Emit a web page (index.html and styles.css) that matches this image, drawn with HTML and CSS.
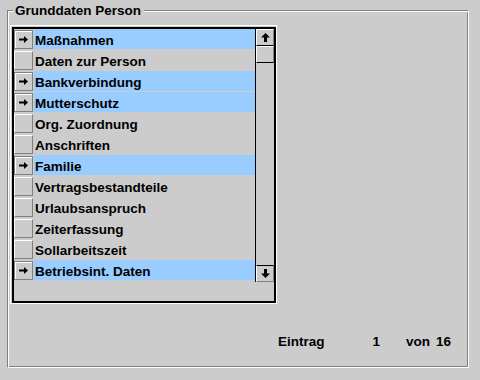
FILE: index.html
```html
<!DOCTYPE html>
<html>
<head>
<meta charset="utf-8">
<link rel="stylesheet" href="styles.css">
</head>
<body>
<div class="group">
  <div class="legend">Grunddaten Person</div>
  <div class="lb-outer">
    <div class="lb-frame">
      <div class="lb">
        <div class="rows">
          <div class="row sel"><span class="btn on"><svg width="9" height="7" viewBox="0 0 9 7"><path d="M0 2.5h5v2H0z M5 0v7l4-3.5z" fill="#000"/></svg></span><span class="txt">Maßnahmen</span></div>
          <div class="row"><span class="btn"></span><span class="txt">Daten zur Person</span></div>
          <div class="row sel"><span class="btn on"><svg width="9" height="7" viewBox="0 0 9 7"><path d="M0 2.5h5v2H0z M5 0v7l4-3.5z" fill="#000"/></svg></span><span class="txt">Bankverbindung</span></div>
          <div class="row sel"><span class="btn on"><svg width="9" height="7" viewBox="0 0 9 7"><path d="M0 2.5h5v2H0z M5 0v7l4-3.5z" fill="#000"/></svg></span><span class="txt">Mutterschutz</span></div>
          <div class="row"><span class="btn"></span><span class="txt">Org. Zuordnung</span></div>
          <div class="row"><span class="btn"></span><span class="txt">Anschriften</span></div>
          <div class="row sel"><span class="btn on"><svg width="9" height="7" viewBox="0 0 9 7"><path d="M0 2.5h5v2H0z M5 0v7l4-3.5z" fill="#000"/></svg></span><span class="txt">Familie</span></div>
          <div class="row"><span class="btn"></span><span class="txt">Vertragsbestandteile</span></div>
          <div class="row"><span class="btn"></span><span class="txt">Urlaubsanspruch</span></div>
          <div class="row"><span class="btn"></span><span class="txt">Zeiterfassung</span></div>
          <div class="row"><span class="btn"></span><span class="txt">Sollarbeitszeit</span></div>
          <div class="row sel"><span class="btn on"><svg width="9" height="7" viewBox="0 0 9 7"><path d="M0 2.5h5v2H0z M5 0v7l4-3.5z" fill="#000"/></svg></span><span class="txt">Betriebsint. Daten</span></div>
        </div>
        <div class="sb">
          <div class="sbtn up"><svg width="9" height="9" viewBox="0 0 9 9"><path d="M4.5 0L9 4.5H6V9H3V4.5H0z" fill="#000"/></svg></div>
          <div class="thumb"></div>
          <div class="track"></div>
          <div class="sbtn down"><svg width="9" height="9" viewBox="0 0 9 9"><path d="M4.5 9L9 4.5H6V0H3v4.5H0z" fill="#000"/></svg></div>
        </div>
      </div>
    </div>
  </div>
  <div class="footer">
    <span class="f-label">Eintrag</span>
    <span class="f-num">1</span>
    <span class="f-von">von</span>
    <span class="f-total">16</span>
  </div>
</div>
</body>
</html>
```
FILE: styles.css
```css
html, body {
  margin: 0;
  padding: 0;
  background: #cccccc;
  width: 480px;
  height: 380px;
  overflow: hidden;
  font-family: "Liberation Sans", Arial, sans-serif;
  font-weight: bold;
  color: #000;
}
.group {
  position: relative;
  box-sizing: border-box;
  margin: 10px 0 0 7px;
  width: 462px;
  height: 358px;
  border: 1px solid;
  border-color: #808080 #ffffff #ffffff #808080;
  box-shadow: inset 1px 1px 0 #ffffff, inset -1px -1px 0 #808080;
  padding: 14px 0 0 2px;
}
.legend {
  position: absolute;
  left: 5px;
  top: -8px;
  padding: 0 3px 0 2px;
  background: #cccccc;
  font-size: 13.5px;
  line-height: 16px;
}
.lb-outer {
  box-sizing: border-box;
  width: 267px;
  height: 279px;
  border: 1px solid #ffffff;
  padding: 1px 0 0 1px;
}
.lb-frame {
  box-sizing: border-box;
  width: 264px;
  height: 276px;
  border: 2px solid #000;
}
.lb {
  display: flex;
  height: 253px;
}
.rows {
  width: 241px;
}
.row {
  display: flex;
  height: 21px;
}
.btn {
  box-sizing: border-box;
  width: 19px;
  height: 19px;
  margin: 1px 1px 0 0;
  border: 1px solid;
  border-color: #ffffff #808080 #808080 #ffffff;
  display: flex;
  align-items: center;
  justify-content: center;
}
.btn.on {
  border-color: #808080;
  box-shadow: inset 1px 1px 0 #ffffff;
}
.txt {
  flex: 1;
  height: 20px;
  font-size: 13.5px;
  line-height: 24px;
  padding-left: 1px;
  white-space: nowrap;
}
.sel .txt {
  background: #99ccff;
}
.sb {
  width: 18px;
  border-left: 1px solid #000;
  display: flex;
  flex-direction: column;
}
.sbtn {
  box-sizing: border-box;
  height: 17px;
  border: 1px solid;
  border-color: #ffffff #808080 #808080 #ffffff;
  display: flex;
  align-items: center;
  justify-content: center;
}
.sbtn.up {
  border-bottom: 1px solid #000;
}
.sbtn.down {
  border-top: 1px solid #000;
}
.thumb {
  box-sizing: border-box;
  height: 17px;
  border: 1px solid;
  border-color: #ffffff #808080 #000000 #ffffff;
}
.track {
  flex: 1;
}
.footer {
  display: flex;
  align-items: baseline;
  margin: 30px 0 0 268px;
  font-size: 13.5px;
}
.f-label { width: 48px; }
.f-num { width: 54px; text-align: right; }
.f-von { margin-left: 26px; width: 30px; }
.f-total { margin-left: 0; }
```
